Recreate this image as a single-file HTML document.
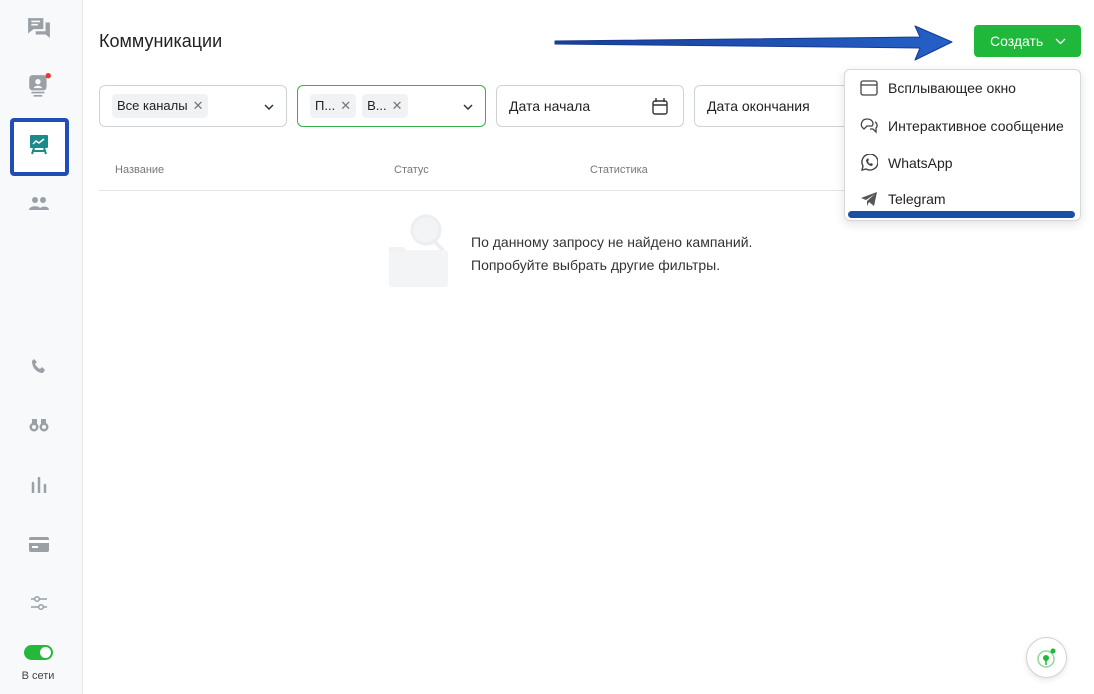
<!DOCTYPE html>
<html><head><meta charset="utf-8"><style>
*{box-sizing:border-box;margin:0;padding:0}
body{width:1094px;height:694px;background:#fff;font-family:"Liberation Sans",sans-serif;color:#222;position:relative;overflow:hidden}
.sb{position:absolute;left:0;top:0;width:83px;height:694px;background:#f8f9fa;border-right:1px solid #e6e8eb}
.ic{position:absolute;left:0;width:77px;display:flex;justify-content:center}
.abs{position:absolute}
.field{position:absolute;top:85px;height:42px;border:1px solid #cfd3d8;border-radius:6px;font-size:14px;display:flex;align-items:center}
.tag{background:#f0f2f4;border-radius:4px;padding:4px 5px;font-size:13px;margin-right:6px;color:#222}
.tag span{color:#777;margin-left:5px}
.th{position:absolute;top:164px;font-size:11px;color:#777}
.mi{position:absolute;left:860px;font-size:14px;color:#222;display:flex;align-items:center}
.mi svg{margin-right:10px}
</style></head><body>
<div class="sb">
<div class="ic" style="top:16px"><svg width="24" height="24" viewBox="0 0 22 22"><path d="M1 2h14v10H6l-5 4z" fill="#9aa0a6"/><path d="M17 6h4v14l-4-3H8v-3h9z" fill="#9aa0a6"/><path d="M4 5h8M4 8h6" stroke="#f8f9fa" stroke-width="1.5"/></svg></div>
<div class="ic" style="top:73px"><svg width="26" height="26" viewBox="0 0 24 24"><rect x="3" y="2" width="16" height="14" rx="3" fill="#9aa0a6"/><circle cx="11" cy="8" r="2.5" fill="#f8f9fa"/><path d="M7 14c1-3 7-3 8 0z" fill="#f8f9fa"/><path d="M5 18h12M7 21h8" stroke="#9aa0a6" stroke-width="1.5"/><circle cx="20.5" cy="2.5" r="2.5" fill="#e53935"/></svg></div>
<div class="abs" style="left:10px;top:118px;width:59px;height:58px;border:4px solid #1f4fb6;border-radius:4px;background:#fff"></div>
<div class="ic" style="top:134px"><svg width="20" height="22" viewBox="0 0 20 22"><rect x="1" y="1" width="18" height="13" rx="1" fill="#1a8a8a"/><path d="M4 10l3-3 3 2 5-4" stroke="#fff" stroke-width="1.5" fill="none"/><path d="M5 14l-2 6M15 14l2 6M3 17h14" stroke="#1a8a8a" stroke-width="2"/></svg></div>
<div class="ic" style="top:196px"><svg width="20" height="16" viewBox="0 0 20 16"><circle cx="6" cy="4" r="3" fill="#9aa0a6"/><circle cx="14" cy="4" r="3" fill="#9aa0a6"/><path d="M0 14c0-5 12-5 12 0zM10 14c0-4 10-5 10 0z" fill="#9aa0a6"/></svg></div>
<div class="ic" style="top:358px"><svg width="16" height="16" viewBox="0 0 16 16"><path d="M3 1l3 3-2 2c1 2 3 4 5 5l2-2 3 3-2 3C6 15 1 10 1 3z" fill="#9aa0a6"/></svg></div>
<div class="ic" style="top:418px"><svg width="20" height="14" viewBox="0 0 20 14"><circle cx="5" cy="9" r="4.5" fill="#9aa0a6"/><circle cx="15" cy="9" r="4.5" fill="#9aa0a6"/><rect x="3" y="1" width="5" height="6" fill="#9aa0a6"/><rect x="12" y="1" width="5" height="6" fill="#9aa0a6"/><circle cx="5" cy="9" r="2" fill="#f8f9fa"/><circle cx="15" cy="9" r="2" fill="#f8f9fa"/></svg></div>
<div class="ic" style="top:477px"><svg width="18" height="16" viewBox="0 0 18 16"><path d="M3 6v10M9 1v15M15 8v8" stroke="#9aa0a6" stroke-width="2.5" stroke-linecap="round"/></svg></div>
<div class="ic" style="top:537px"><svg width="20" height="15" viewBox="0 0 20 15"><rect width="20" height="15" rx="2" fill="#9aa0a6"/><rect y="3" width="20" height="3" fill="#fff"/><rect x="3" y="9" width="6" height="2" fill="#fff"/></svg></div>
<div class="ic" style="top:594px"><svg width="18" height="18" viewBox="0 0 18 18"><path d="M1 5h16M1 13h16" stroke="#9aa0a6" stroke-width="1.5"/><circle cx="7" cy="5" r="2.3" fill="#f8f9fa" stroke="#9aa0a6" stroke-width="1.5"/><circle cx="11" cy="13" r="2.3" fill="#f8f9fa" stroke="#9aa0a6" stroke-width="1.5"/></svg></div>
<div class="abs" style="left:24px;top:645px;width:29px;height:15px;border-radius:8px;background:#25b93b"><div class="abs" style="right:2px;top:2px;width:11px;height:11px;border-radius:50%;background:#fff"></div></div>
<div class="abs" style="left:0;width:76px;top:670px;text-align:center;font-size:11px;color:#444">В сети</div>
</div>

<div class="abs" style="left:99px;top:31px;font-size:18px;color:#222">Коммуникации</div>

<svg class="abs" style="left:550px;top:22px" width="410" height="42" viewBox="0 0 410 42"><defs><linearGradient id="g" x1="0" x2="1"><stop offset="0" stop-color="#1a3f9a"/><stop offset="1" stop-color="#2460c8"/></linearGradient></defs><path d="M5 19L370 15L365 4L402 20L365 38L370 26L5 22z" fill="url(#g)" stroke="#163a8c" stroke-width="1" stroke-linejoin="round"/></svg>

<div class="abs" style="left:974px;top:25px;width:107px;height:32px;background:#1fb83a;border-radius:4px;color:#fff;font-size:14px;display:flex;align-items:center;padding-left:16px">Создать<svg style="margin-left:12px" width="11" height="7" viewBox="0 0 11 7"><path d="M1 1l4.5 4.5L10 1" stroke="#fff" stroke-width="1.3" fill="none"/></svg></div>

<div class="field" style="left:99px;width:188px;padding-left:12px"><div class="tag">Все каналы<span>✕</span></div><svg class="abs" style="right:12px;top:18px" width="10" height="6" viewBox="0 0 10 6"><path d="M1 1l4 4 4-4" stroke="#333" stroke-width="1.5" fill="none"/></svg></div>
<div class="field" style="left:297px;width:189px;padding-left:12px;border-color:#35b24a"><div class="tag">П...<span>✕</span></div><div class="tag">В...<span>✕</span></div><svg class="abs" style="right:12px;top:18px" width="10" height="6" viewBox="0 0 10 6"><path d="M1 1l4 4 4-4" stroke="#333" stroke-width="1.5" fill="none"/></svg></div>
<div class="field" style="left:496px;width:188px;padding-left:12px">Дата начала<svg class="abs" style="right:15px;top:12px" width="16" height="17" viewBox="0 0 16 17"><rect x="1" y="3" width="14" height="13" rx="2" fill="none" stroke="#333" stroke-width="1.4"/><path d="M1 7h14M4 0v4M12 0v4" stroke="#333" stroke-width="1.4"/></svg></div>
<div class="field" style="left:694px;width:160px;padding-left:12px;border-right:none;border-radius:6px 0 0 6px">Дата окончания</div>

<div class="th" style="left:115px">Название</div>
<div class="th" style="left:394px">Статус</div>
<div class="th" style="left:590px">Статистика</div>
<div class="abs" style="left:99px;top:190px;width:982px;height:1px;background:#e2e5e8"></div>

<svg class="abs" style="left:386px;top:214px" width="62" height="74" viewBox="0 0 62 74"><circle cx="40" cy="16" r="14" fill="#f3f4f6" stroke="#eceef1" stroke-width="3"/><path d="M48 27l8 8" stroke="#eceef1" stroke-width="4" stroke-linecap="round"/><rect x="3" y="36" width="59" height="37" rx="3" fill="#f3f4f6"/><rect x="3" y="33" width="16" height="5" rx="2" fill="#f0f1f3"/></svg>
<div class="abs" style="left:471px;top:231px;font-size:14px;line-height:23px;color:#333">По данному запросу не найдено кампаний.<br>Попробуйте выбрать другие фильтры.</div>

<div class="abs" style="left:844px;top:69px;width:237px;height:152px;background:#fff;border:1px solid #d5d8dc;border-radius:6px;box-shadow:0 3px 10px rgba(0,0,0,.12)"></div>
<div class="mi" style="top:80px"><svg width="18" height="16" viewBox="0 0 18 16"><rect x="1" y="1" width="16" height="14" rx="2" fill="none" stroke="#444" stroke-width="1.3"/><path d="M1 5h16" stroke="#444" stroke-width="1.3"/></svg>Всплывающее окно</div>
<div class="mi" style="top:117px"><svg width="18" height="17" viewBox="0 0 18 17"><path d="M3 11C0 9 1 2 7 2s7 5 5 7H7l-3 3z" fill="none" stroke="#444" stroke-width="1.3"/><path d="M10 12h3l3 3v-4c2-2 1-5-1-6" fill="none" stroke="#444" stroke-width="1.3"/></svg>Интерактивное сообщение</div>
<div class="mi" style="top:154px"><svg width="18" height="18" viewBox="0 0 18 18"><path d="M2 16l1-4A8 8 0 1 1 6 15z" fill="none" stroke="#444" stroke-width="1.4"/><path d="M6 6c0 3 3 6 6 6l1-2-2-1-1 1c-1-1-2-2-2-3l1-1-1-2z" fill="#444"/></svg>WhatsApp</div>
<div class="mi" style="top:191px"><svg width="18" height="16" viewBox="0 0 18 16"><path d="M1 7L17 1l-3 14-5-4-2 4v-5l8-7-9 6z" fill="#555"/></svg>Telegram</div>
<div class="abs" style="left:848px;top:211px;width:227px;height:7px;border-radius:4px;background:#1a4fa8"></div>

<div class="abs" style="left:1026px;top:637px;width:41px;height:41px;border-radius:50%;background:#fff;border:1px solid #d0d3d6;box-shadow:0 2px 6px rgba(0,0,0,.1)"><svg class="abs" style="left:8px;top:8px" width="24" height="24" viewBox="0 0 24 24"><circle cx="11" cy="13" r="8" fill="none" stroke="#8fd89a" stroke-width="1.5"/><circle cx="11" cy="12" r="3" fill="#1fb83a"/><path d="M11 14v5" stroke="#1fb83a" stroke-width="1.5"/><circle cx="18" cy="5" r="2.5" fill="#1fb83a"/></svg></div>
</body></html>
